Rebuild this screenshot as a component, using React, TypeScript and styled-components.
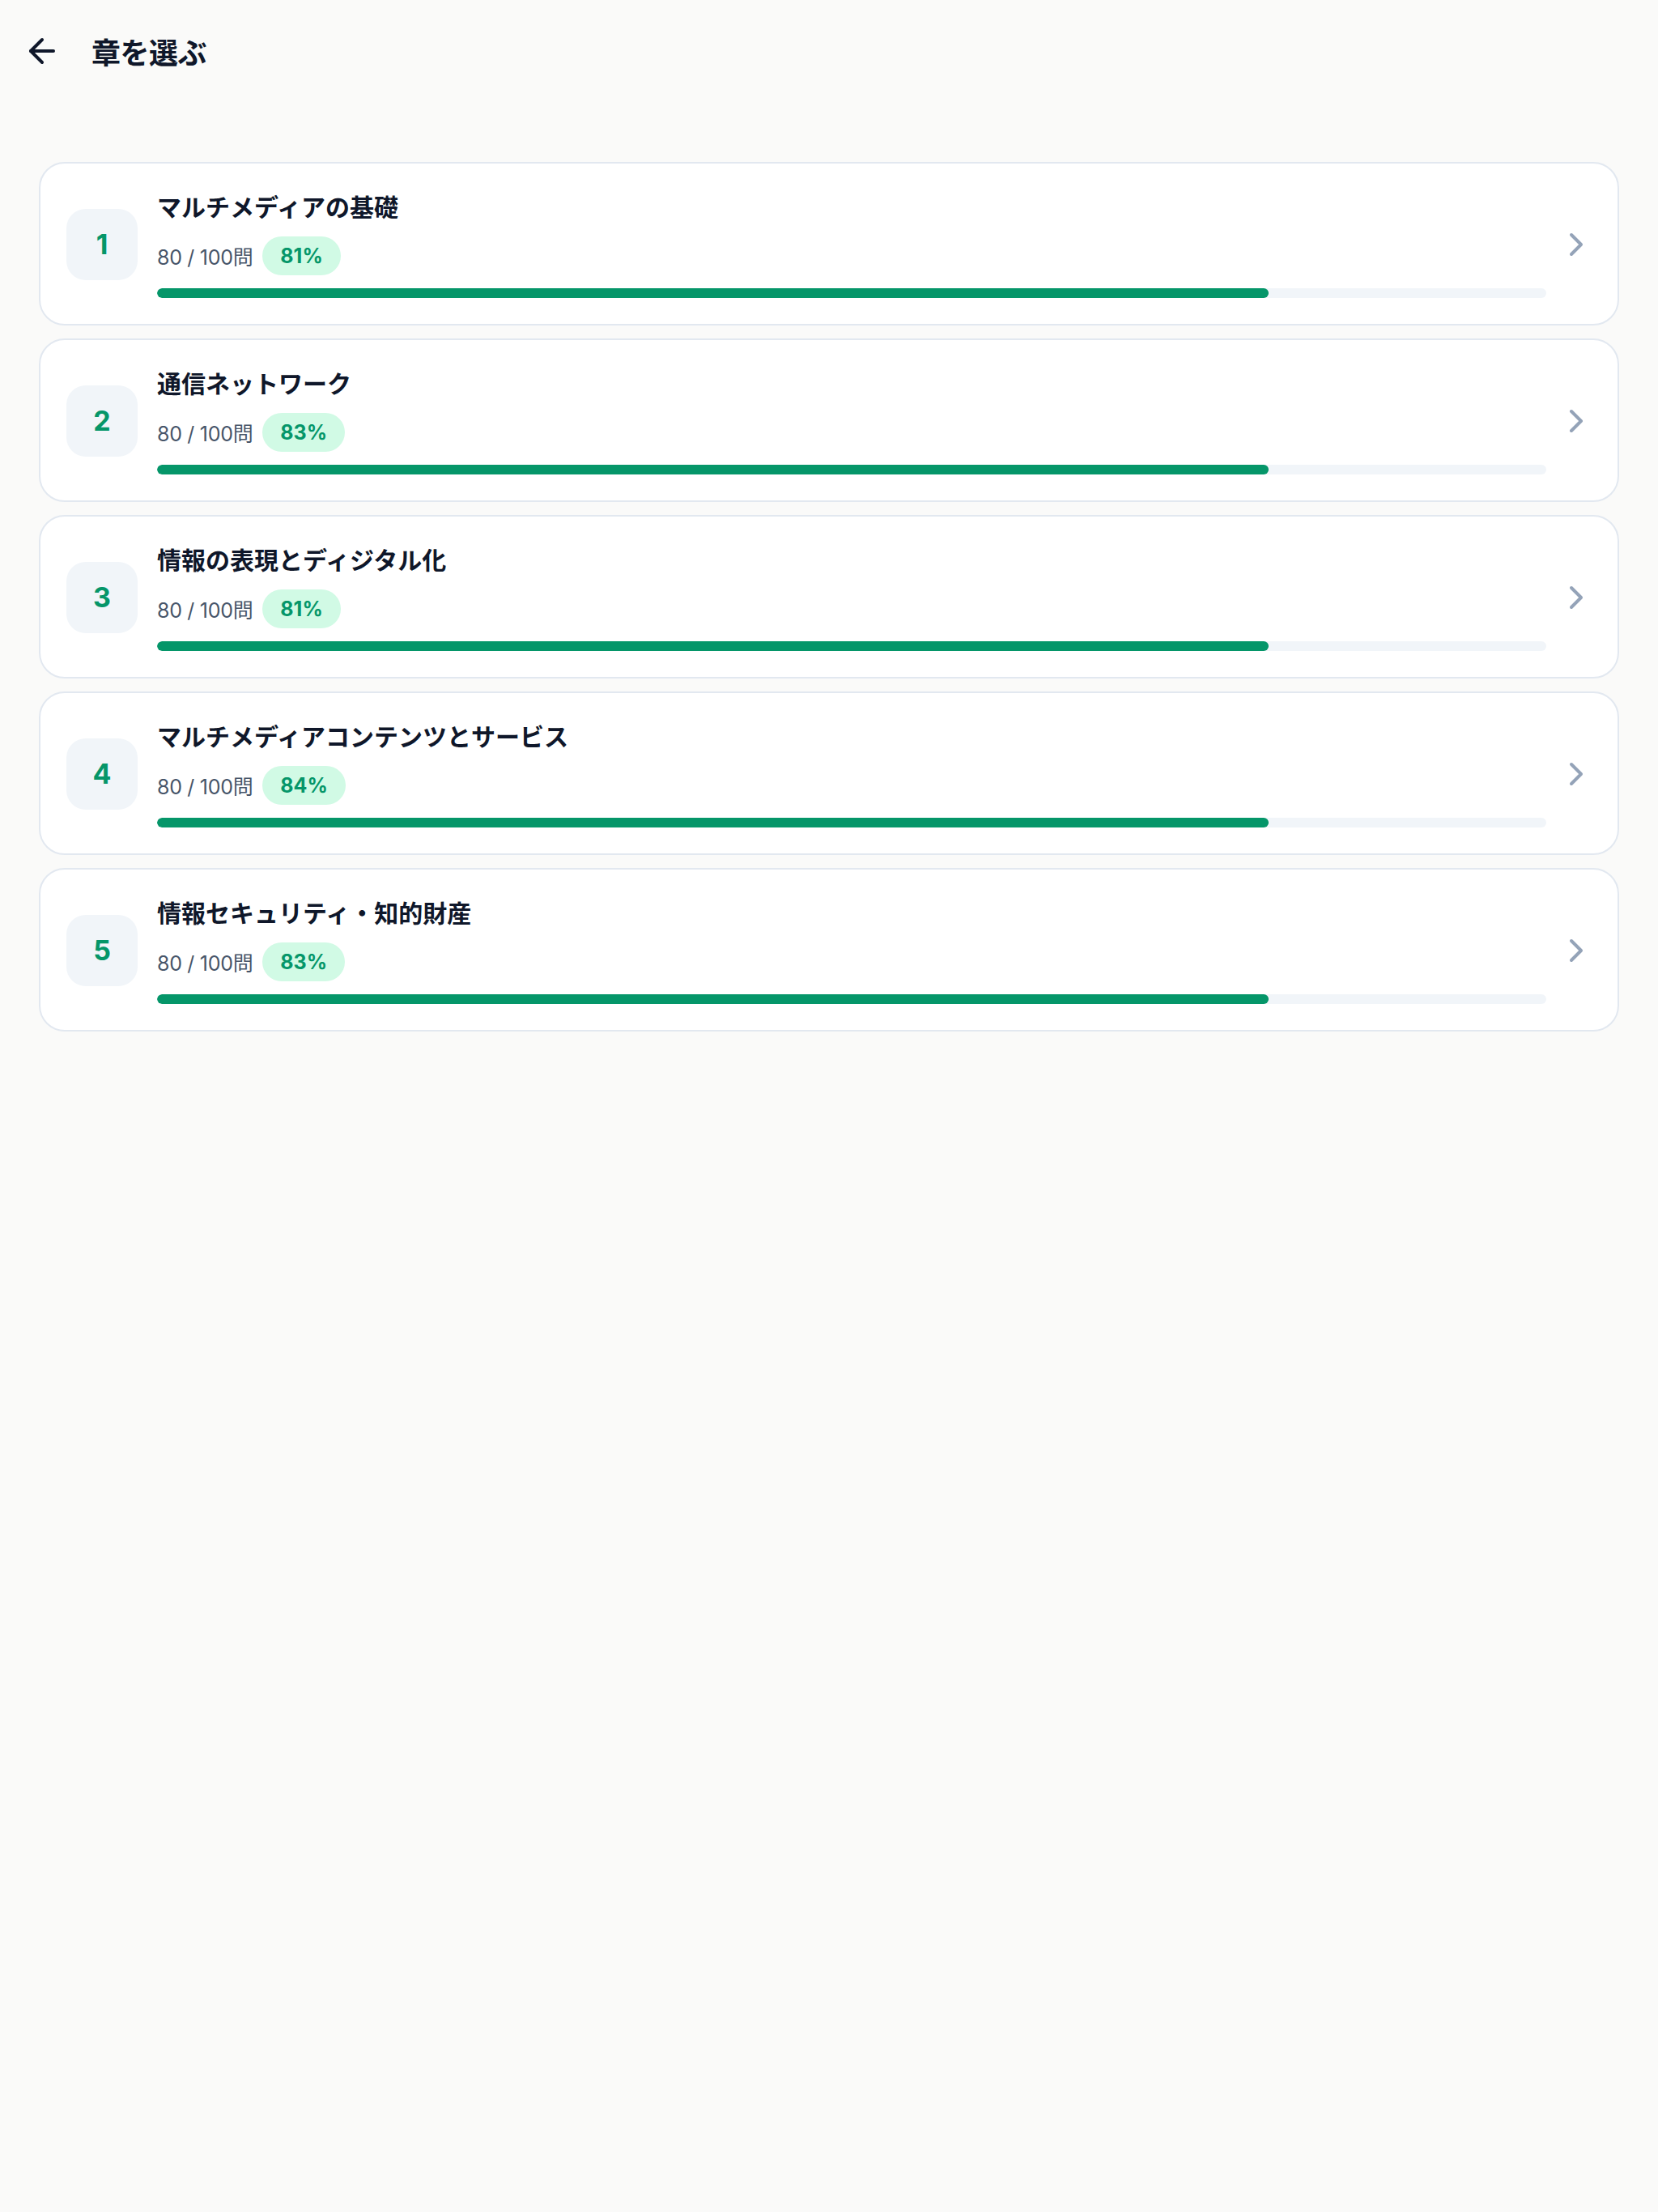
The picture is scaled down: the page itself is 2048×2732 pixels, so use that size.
import React from 'react';
import styled, {createGlobalStyle} from 'styled-components';
import {ArrowLeft, ChevronRight} from 'lucide-react';

interface Chapter {
    id: number;
    title: string;
    answered: number;
    total: number;
    accuracy: number;
}

const chapters: Chapter[] = [
    {id: 1, title: 'マルチメディアの基礎', answered: 80, total: 100, accuracy: 81},
    {id: 2, title: '通信ネットワーク', answered: 80, total: 100, accuracy: 83},
    {id: 3, title: '情報の表現とディジタル化', answered: 80, total: 100, accuracy: 81},
    {id: 4, title: 'マルチメディアコンテンツとサービス', answered: 80, total: 100, accuracy: 84},
    {id: 5, title: '情報セキュリティ・知的財産', answered: 80, total: 100, accuracy: 83},
];

const GlobalStyle = createGlobalStyle`
    html, body {
        margin: 0;
        padding: 0;
        background: #fafaf9;
    }
    body {
        font-family: 'Inter', 'Noto Sans CJK JP', sans-serif;
        -webkit-font-smoothing: antialiased;
    }
`;

const Page = styled.div`
    min-height: 2732px;
    background: #fafaf9;
`;

const Header = styled.header`
    height: 126px;
    display: flex;
    align-items: center;
    gap: 37px;
    padding: 0 28px;
`;

const BackButton = styled.button`
    display: flex;
    align-items: center;
    justify-content: center;
    padding: 0;
    border: none;
    background: none;
    color: #0f172a;
    cursor: pointer;
`;

const PageTitle = styled.h1`
    margin: 0;
    font-size: 36px;
    font-weight: 700;
    color: #0f172a;
    letter-spacing: -0.5px;
`;

const List = styled.main`
    display: flex;
    flex-direction: column;
    gap: 16px;
    padding: 74px 48px;
`;

const Card = styled.div`
    display: flex;
    align-items: center;
    gap: 24px;
    padding: 33px 32px 32px;
    background: #ffffff;
    border: 2px solid #e2e8f0;
    border-radius: 32px;
    cursor: pointer;
`;

const NumberBox = styled.div`
    flex: none;
    width: 88px;
    height: 88px;
    display: flex;
    align-items: center;
    justify-content: center;
    border-radius: 24px;
    background: #f1f5f9;
    color: #059669;
    font-size: 34px;
    font-weight: 700;
`;

const Body = styled.div`
    flex: 1;
    display: flex;
    flex-direction: column;
`;

const ChapterTitle = styled.div`
    font-size: 30px;
    line-height: 42px;
    font-weight: 700;
    color: #0f172a;
`;

const MetaRow = styled.div`
    display: flex;
    align-items: center;
    gap: 12px;
    margin-top: 15px;
`;

const Count = styled.span`
    font-size: 25px;
    color: #475569;
    letter-spacing: -0.3px;
`;

const Badge = styled.span`
    height: 48px;
    display: inline-flex;
    align-items: center;
    padding: 0 22px;
    border-radius: 999px;
    background: #d1fae5;
    color: #059669;
    font-size: 25px;
    font-weight: 700;
`;

const Track = styled.div`
    margin-top: 16px;
    height: 12px;
    border-radius: 6px;
    background: #f1f5f9;
    overflow: hidden;
`;

const Fill = styled.div`
    height: 100%;
    border-radius: 6px;
    background: #059669;
`;

const Chevron = styled(ChevronRight)`
    flex: none;
    margin-left: -11px;
    margin-right: -5px;
    color: #94a3b8;
`;

const ChapterCard = ({chapter}: {chapter: Chapter}) => {
    const progress = (chapter.answered / chapter.total) * 100;

    return (
        <Card>
            <NumberBox>{chapter.id}</NumberBox>
            <Body>
                <ChapterTitle>{chapter.title}</ChapterTitle>
                <MetaRow>
                    <Count>{chapter.answered} / {chapter.total}問</Count>
                    <Badge>{chapter.accuracy}%</Badge>
                </MetaRow>
                <Track>
                    <Fill style={{width: `${progress}%`}} />
                </Track>
            </Body>
            <Chevron size={48} strokeWidth={2} />
        </Card>
    );
};

const App = () => (
    <>
        <GlobalStyle />
        <Page>
            <Header>
                <BackButton aria-label='戻る'>
                    <ArrowLeft size={48} strokeWidth={2} />
                </BackButton>
                <PageTitle>章を選ぶ</PageTitle>
            </Header>
            <List>
                {chapters.map(chapter => (
                    <ChapterCard key={chapter.id} chapter={chapter} />
                ))}
            </List>
        </Page>
    </>
);

export default App;
